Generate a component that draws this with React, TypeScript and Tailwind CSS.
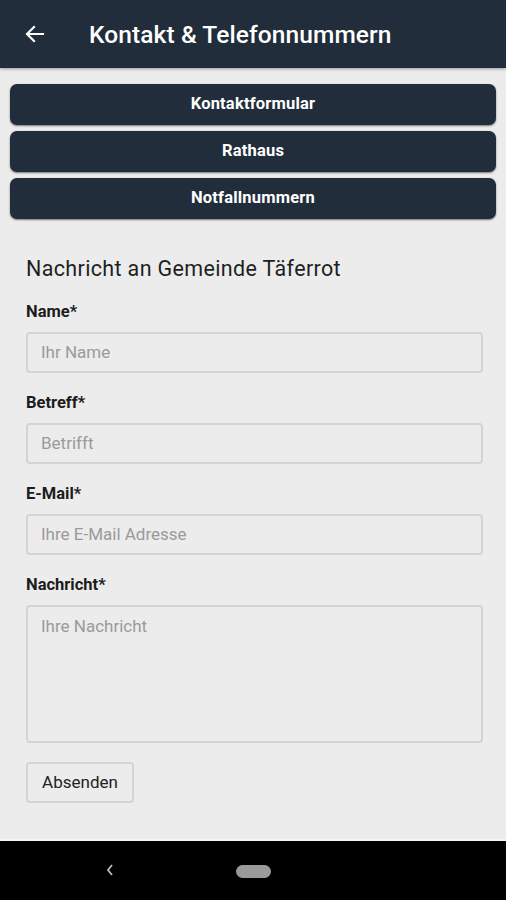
import React from "react";

const font = { fontFamily: "Roboto, 'Noto Sans', Arial, sans-serif" };

function Field({ label, placeholder }: { label: string; placeholder: string }) {
  return (
    <div className="flex flex-col">
      <div className="text-[16.5px] font-bold text-[#1c1c1c] leading-[18px]">{label}</div>
      <div className="mt-[11px] h-[41px] rounded-[4px] border-2 border-[#d4d4d4] flex items-center pl-[13px] text-[17px] text-[#9a9a9a]">
        {placeholder}
      </div>
    </div>
  );
}

export default function App() {
  return (
    <div className="w-[506px] h-[900px] flex flex-col bg-[#ececec] overflow-hidden" style={font}>
      <div className="h-[68px] bg-[#222d3b] flex items-center shrink-0 shadow-[0_1px_3px_rgba(0,0,0,0.35)] relative z-10">
        <svg className="ml-[23px]" width="24" height="24" viewBox="0 0 24 24" fill="none">
          <path d="M20 12H5M11 5l-7 7 7 7" stroke="#fff" strokeWidth="2.2" strokeLinecap="square" />
        </svg>
        <div className="ml-[42px] mt-[3px] text-white text-[24.5px] font-medium tracking-[0.1px]">Kontakt &amp; Telefonnummern</div>
      </div>
      <div className="flex-1 flex flex-col">
        <div className="px-[10px] pt-[16px] flex flex-col gap-[6px]">
          {["Kontaktformular", "Rathaus", "Notfallnummern"].map((t) => (
            <div
              key={t}
              className="h-[41px] rounded-[7px] bg-[#222d3b] flex items-center justify-center text-white text-[16.5px] font-bold tracking-[0.2px] shadow-[0_1px_2px_rgba(0,0,0,0.5)]"
            >
              {t}
            </div>
          ))}
        </div>
        <div className="pl-[26px] pr-[23px] pt-[38px] flex flex-col">
          <div className="text-[21.5px] text-[#1f1f1f] leading-[24px] tracking-[0.35px]">Nachricht an Gemeinde Täferrot</div>
          <div className="mt-[22px] flex flex-col gap-[21px]">
            <Field label="Name*" placeholder="Ihr Name" />
            <Field label="Betreff*" placeholder="Betrifft" />
            <Field label="E-Mail*" placeholder="Ihre E-Mail Adresse" />
            <div className="flex flex-col">
              <div className="text-[16.5px] font-bold text-[#1c1c1c] leading-[18px]">Nachricht*</div>
              <div className="mt-[11px] h-[138px] rounded-[4px] border-2 border-[#d4d4d4] pl-[13px] pt-[7px] text-[17px] text-[#9a9a9a]">
                Ihre Nachricht
              </div>
            </div>
          </div>
          <div className="mt-[19px] w-[108px] h-[41px] rounded-[4px] border-2 border-[#d4d4d4] flex items-center justify-center text-[17px] text-[#222]">
            Absenden
          </div>
        </div>
      </div>
      <div className="h-[2px] bg-[#f6f6f6] shrink-0" />
      <div className="h-[59px] bg-black shrink-0 flex items-center relative">
        <svg className="absolute left-[105px] top-[22px]" width="10" height="14" viewBox="0 0 10 14" fill="none">
          <path d="M7 2L3 7l4 5" stroke="#bdbdbd" strokeWidth="1.8" />
        </svg>
        <div className="absolute left-[236px] top-[24px] w-[35px] h-[13px] rounded-full bg-[#9a9a9a]" />
      </div>
    </div>
  );
}
